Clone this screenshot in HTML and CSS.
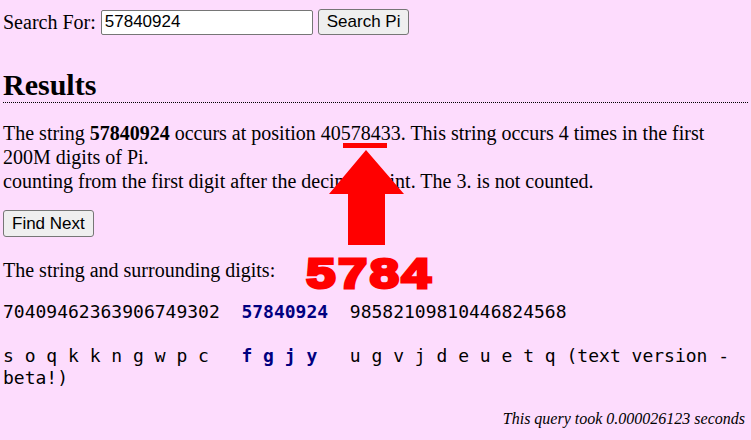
FILE: index.html
```html
<!doctype html>
<html lang="en">
  <head>
    <meta charset="UTF-8" />
    <meta name="viewport" content="width=device-width, initial-scale=1.0" />
    <title>Pi Search</title>
    <link rel="stylesheet" href="styles.css">
  </head>
  <body>
    <!-- Search form -->
    <form class="search" onsubmit="return false">
      <label for="search-for">Search For:</label>
      <input type="text" id="search-for" value="57840924" />
      <button type="submit">Search Pi</button>
    </form>

    <!-- Results -->
    <div class="results">
      <h2>Results</h2>
      <p class="summary">
        The string <b>57840924</b> occurs at position 40578433. This string occurs 4 times in the first 200M digits of Pi.<br>
        counting from the first digit after the decimal point. The 3. is not counted.
      </p>

      <button class="find-next">Find Next</button>

      <p class="surround-label">The string and surrounding digits:</p>
      <p class="digits">70409462363906749302  <b>57840924</b>  98582109810446824568</p>
      <p class="digits letters">s o q k k n g w p c   <b>f g j y</b>   u g v j d e u e t q (text version - beta!)</p>

      <p class="timing">This query took 0.000026123 seconds</p>

      <!-- annotation drawn over the page -->
      <div class="callout">
        <svg width="80" height="105" viewBox="0 0 80 105">
          <rect x="14" y="0" width="44" height="5" fill="#ff0000" />
          <polygon points="37,7 75,51 56,51 56,102 19,102 19,51 0,51" fill="#ff0000" />
        </svg>
        <div class="callout-text">5784</div>
      </div>
    </div>
  </body>
</html>
```

FILE: styles.css
```css
body {
  margin: 0;
  padding: 9px 3px 0;
  background-color: #fddcfd;
  color: #000;
  font-family: "Liberation Serif", "Times New Roman", serif;
  font-size: 20px;
}
.search {
  display: flex;
  align-items: center;
  gap: 5px;
  margin: 0;
}
.search input {
  width: 212px;
  height: 25px;
  box-sizing: border-box;
  padding: 1px 3px;
  border: 1px solid #767676;
  border-radius: 2px;
  background: #fff;
  font-family: "Liberation Sans", Arial, sans-serif;
  font-size: 17px;
}
button {
  height: 26px;
  padding: 0 8px;
  border: 1px solid #767676;
  border-radius: 3px;
  background-color: #efefef;
  font-family: "Liberation Sans", Arial, sans-serif;
  font-size: 17px;
  color: #000;
}
.results {
  position: relative;
}
.results h2 {
  margin: 33px 0 0;
  font-size: 30px;
  line-height: 34px;
  border-bottom: 1px dotted #000;
  padding-bottom: 0;
}
.summary {
  margin: 18px 0 0;
  line-height: 24px;
}
.find-next {
  margin-top: 17px;
  height: 27px;
  padding: 0 8px;
}
.surround-label {
  margin: 21px 0 0;
  line-height: 24px;
}
.digits {
  margin: 19px 0 0;
  font-family: "DejaVu Sans Mono", "Liberation Mono", monospace;
  font-size: 18px;
  line-height: 22px;
  white-space: pre-wrap;
}
.digits b {
  color: #000080;
}
.letters {
  margin-top: 22px;
}
.timing {
  margin: 21px 3px 0 0;
  text-align: right;
  font-style: italic;
  font-size: 16px;
}
.callout {
  position: absolute;
  left: 296px;
  top: 75px;
  width: 140px;
  display: flex;
  flex-direction: column;
  align-items: center;
}
.callout-text {
  margin-top: 8px;
  color: #ff0000;
  font-family: "Liberation Sans", Arial, sans-serif;
  font-weight: bold;
  font-size: 42px;
  line-height: 36px;
  letter-spacing: 2px;
  margin-right: -2px;
  -webkit-text-stroke: 3px #ff0000;
  transform: scaleX(1.25);
}
```
